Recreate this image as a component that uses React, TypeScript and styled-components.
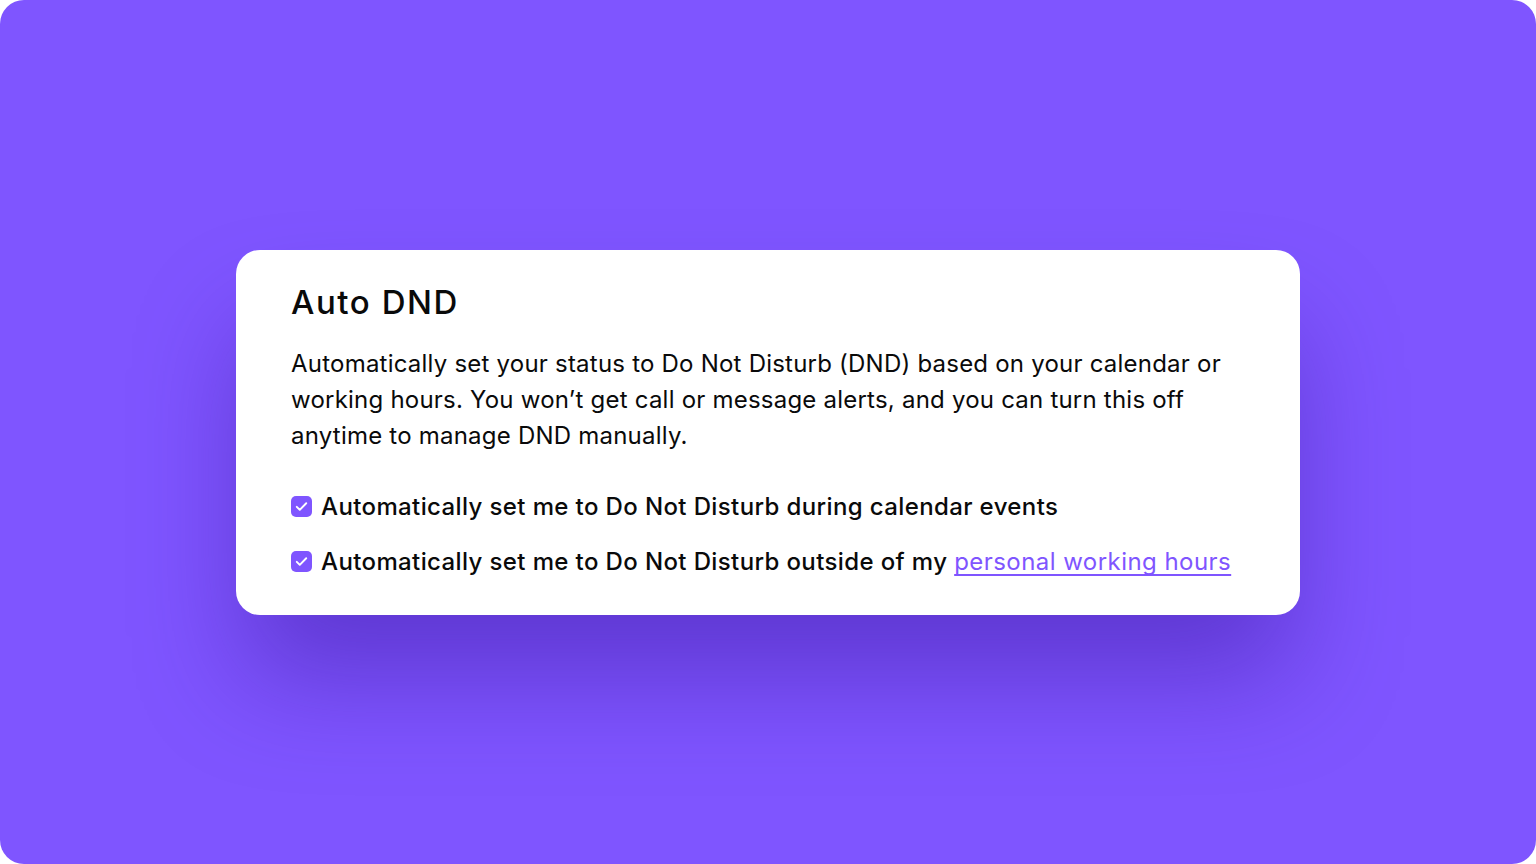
import React from "react";
import styled, { createGlobalStyle } from "styled-components";

const GlobalStyle = createGlobalStyle`
  html, body {
    margin: 0;
    padding: 0;
    background: #ffffff;
  }
  body {
    font-family: Inter, "Noto Sans", "Liberation Sans", sans-serif;
    -webkit-font-smoothing: antialiased;
  }
`;

const Stage = styled.div`
  width: 1536px;
  height: 864px;
  box-sizing: border-box;
  background: #7f55ff;
  border-radius: 24px;
  display: flex;
  align-items: center;
  justify-content: center;
`;

const Card = styled.section`
  width: 1064px;
  box-sizing: border-box;
  background: #ffffff;
  border-radius: 24px;
  padding: 32px 55px 35px;
  box-shadow: 0 70px 110px -10px rgba(45, 10, 140, 0.4);
  color: #0a0a0a;
`;

const Title = styled.h1`
  margin: 0;
  font-size: 33px;
  line-height: 40px;
  font-weight: 500;
  letter-spacing: 1.55px;
`;

const Description = styled.p`
  margin: 24px 0 35px;
  font-size: 24px;
  line-height: 36px;
  font-weight: 400;
  letter-spacing: 0.22px;
`;

const Options = styled.div`
  display: flex;
  flex-direction: column;
  gap: 19px;
`;

const Option = styled.label`
  display: flex;
  align-items: center;
  gap: 9px;
  font-size: 24px;
  line-height: 36px;
  font-weight: 500;
  letter-spacing: 0.38px;
`;

const Box = styled.span`
  width: 21px;
  height: 21px;
  border-radius: 5px;
  background: #7f55ff;
  display: inline-flex;
  align-items: center;
  justify-content: center;
  flex-shrink: 0;
`;

const Link = styled.a`
  color: #7f55ff;
  font-weight: 400;
  letter-spacing: 0.45px;
  text-decoration: underline;
  text-underline-offset: 4px;
  text-decoration-thickness: 1.5px;
  text-decoration-skip-ink: none;
`;

const Check = () => (
  <Box>
    <svg width="15" height="15" viewBox="0 0 14 14" fill="none">
      <path d="M2.6 7.3l2.8 2.8L11.4 4" stroke="#ffffff" strokeWidth="1.8" strokeLinecap="round" strokeLinejoin="round" />
    </svg>
  </Box>
);

const App = () => (
  <>
    <GlobalStyle />
    <Stage>
      <Card>
        <Title>Auto DND</Title>
        <Description>
          Automatically set your status to Do Not Disturb (DND) based on your calendar or working hours. You won’t get
          call or message alerts, and you can turn this off anytime to manage DND manually.
        </Description>
        <Options>
          <Option>
            <Check />
            Automatically set me to Do Not Disturb during calendar events
          </Option>
          <Option>
            <Check />
            <span>
              Automatically set me to Do Not Disturb outside of my <Link href="#">personal working hours</Link>
            </span>
          </Option>
        </Options>
      </Card>
    </Stage>
  </>
);

export default App;
